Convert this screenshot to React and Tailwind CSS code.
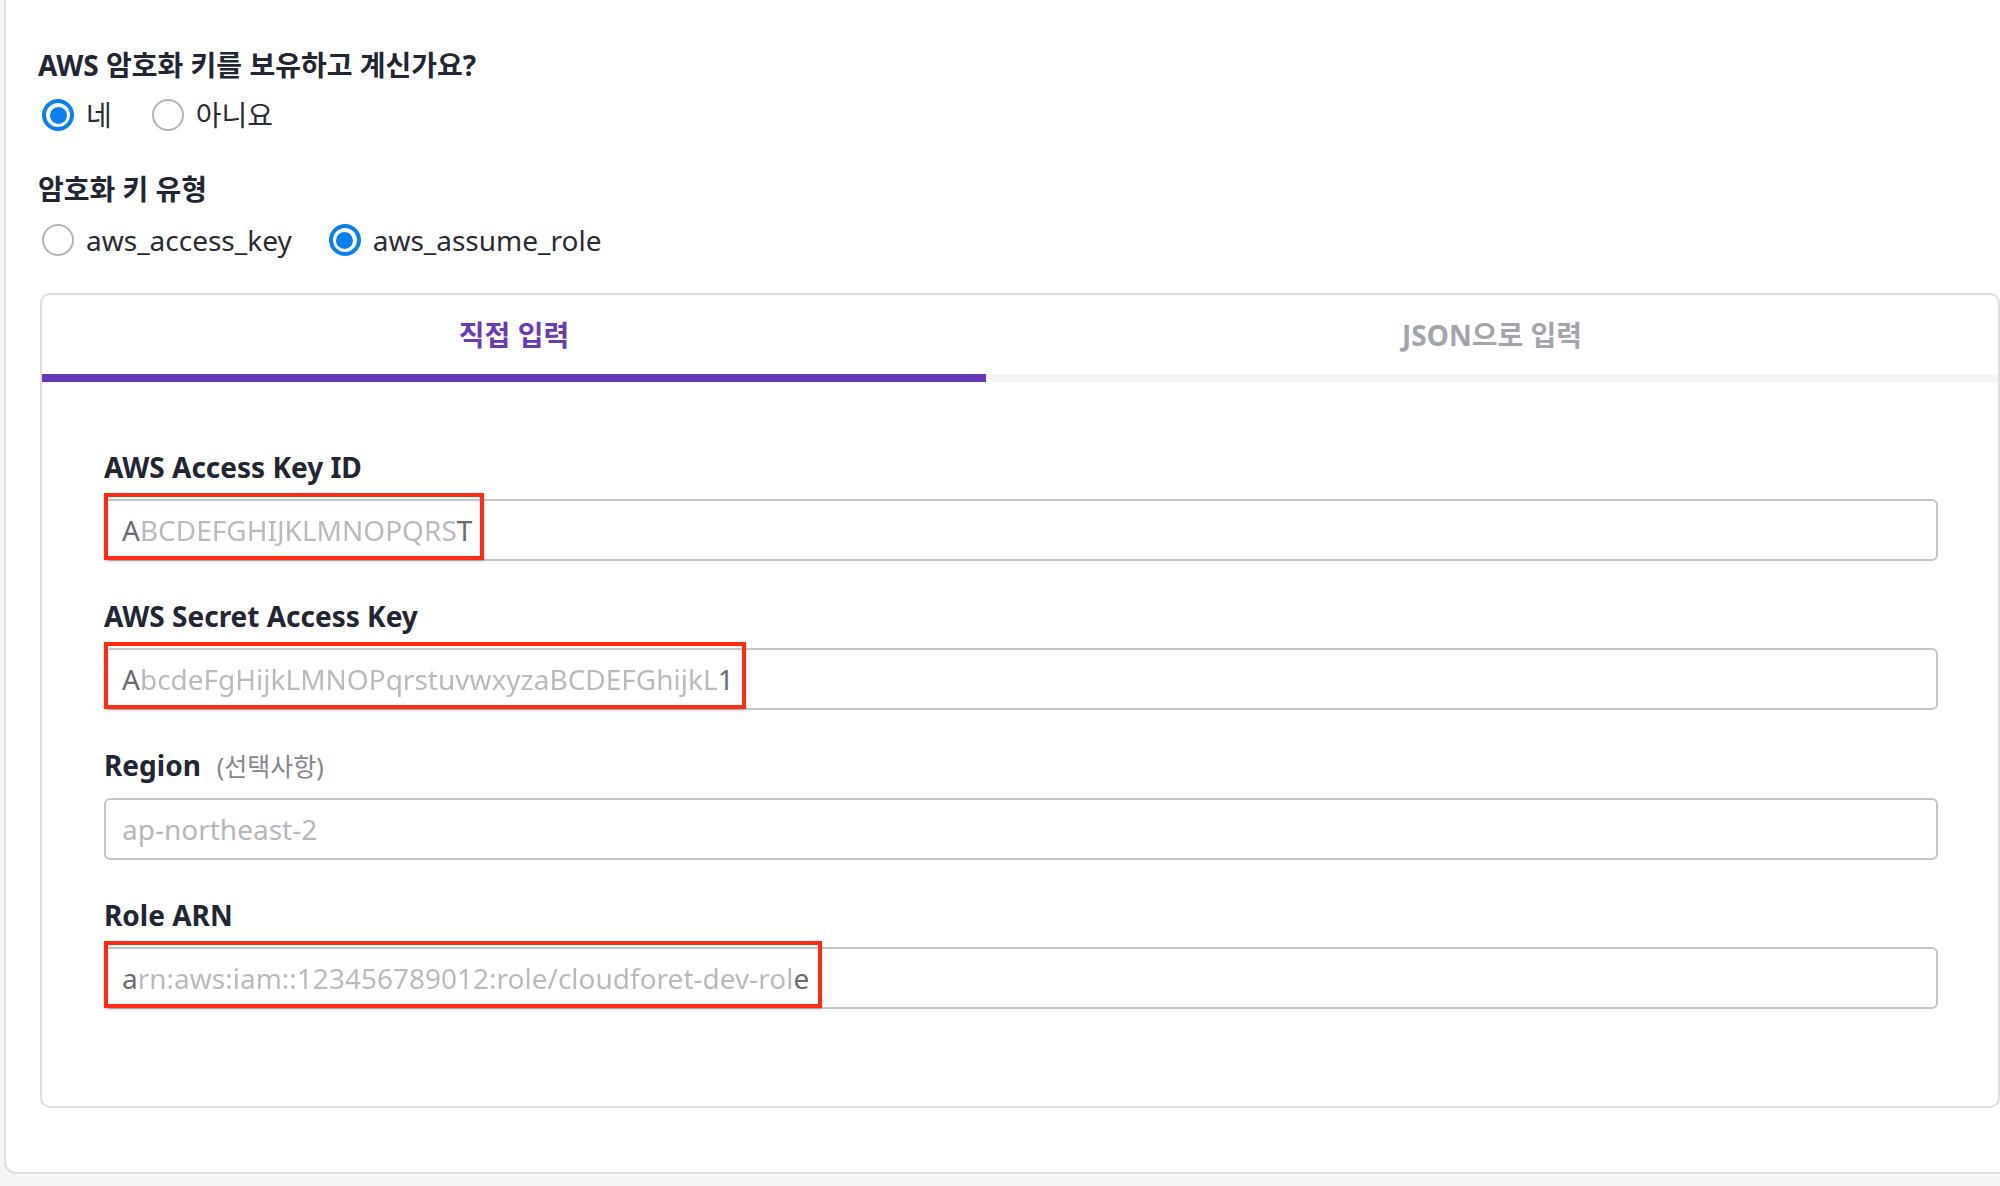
import React from "react";

const FONT = { fontFamily: '"Noto Sans", "Noto Sans CJK KR", sans-serif' };

function Radio({ checked, label }) {
  return (
    <div className="flex items-center gap-[12px]">
      {checked ? (
        <span className="flex h-[32px] w-[32px] items-center justify-center rounded-full border-[4px] border-[#0b7ff2] bg-white">
          <span className="h-[17px] w-[17px] rounded-full bg-[#0b7ff2]" />
        </span>
      ) : (
        <span className="h-[32px] w-[32px] rounded-full border-[2px] border-[#b4b4b8] bg-white" />
      )}
      <span className="text-[28px] leading-[36px] text-[#2a2b33]">{label}</span>
    </div>
  );
}

function Field({ label, optional, children, redWidth }) {
  return (
    <div>
      <div className="flex items-baseline">
        <span className="text-[28px] font-bold leading-[36px] text-[#222532]">{label}</span>
        {optional && (
          <span className="ml-[16px] text-[25px] leading-[36px] text-[#85858f]">{optional}</span>
        )}
      </div>
      <div className="relative mt-[14px]">
        <div className="flex h-[62px] items-center rounded-[6px] border-2 border-[#c4c4c9] bg-white px-[16px] text-[28px] leading-[36px]">
          {children}
        </div>
        {redWidth && (
          <div
            className="absolute left-0 top-[-6px] h-[67px] border-[4px] border-[#ff2b13] shadow-[0_2px_2px_rgba(0,0,0,0.15)]"
            style={{ width: redWidth }}
          />
        )}
      </div>
    </div>
  );
}

function Blurred({ first, middle, last }) {
  return (
    <span className="whitespace-nowrap">
      <span className="text-[#6b6b72]">{first}</span>
      <span className="text-[#b9b9bf] blur-[0.7px]">{middle}</span>
      <span className="text-[#6b6b72]">{last}</span>
    </span>
  );
}

export default function App() {
  return (
    <div className="h-[1186px] w-full overflow-hidden bg-[#f5f5f5]" style={FONT}>
      <div className="ml-[4px] h-[1174px] rounded-bl-[12px] border-b-2 border-l-2 border-[#dedee0] bg-white pl-[32px] pt-[47px]">
        <div className="text-[28px] font-bold leading-[36px] text-[#222532]">
          AWS 암호화 키를 보유하고 계신가요?
        </div>
        <div className="ml-[4px] mt-[14px] flex gap-x-[40px]">
          <Radio checked label="네" />
          <Radio label="아니요" />
        </div>
        <div className="mt-[38px] text-[28px] font-bold leading-[36px] text-[#222532]">
          암호화 키 유형
        </div>
        <div className="ml-[4px] mt-[15px] flex gap-x-[37px]">
          <Radio label="aws_access_key" />
          <Radio checked label="aws_assume_role" />
        </div>

        <div className="ml-[2px] mt-[35px] w-[1960px] rounded-[10px] border-2 border-[#dedee0] bg-white">
          <div className="flex">
            <div className="flex w-[944px] flex-col">
              <div className="flex h-[79px] items-center justify-center text-[28px] font-bold text-[#6a3ab8]">
                직접 입력
              </div>
              <div className="h-[8px] bg-[#6838b6]" />
            </div>
            <div className="flex flex-1 flex-col">
              <div className="flex h-[79px] items-center justify-center text-[28px] font-bold text-[#a3a3ab]">
                JSON으로 입력
              </div>
              <div className="h-[8px] bg-[#f5f5f6]" />
            </div>
          </div>

          <div className="flex flex-col gap-[37px] pb-[97px] pl-[62px] pr-[60px] pt-[67px]">
            <Field label="AWS Access Key ID" redWidth={380}>
              <Blurred first="A" middle="BCDEFGHIJKLMNOPQRS" last="T" />
            </Field>
            <Field label="AWS Secret Access Key" redWidth={642}>
              <Blurred first="A" middle="bcdeFgHijkLMNOPqrstuvwxyzaBCDEFGhijkL" last="1" />
            </Field>
            <Field label="Region" optional="(선택사항)">
              <span className="text-[#b6b6bc]">ap-northeast-2</span>
            </Field>
            <Field label="Role ARN" redWidth={718}>
              <Blurred first="a" middle="rn:aws:iam::123456789012:role/cloudforet-dev-rol" last="e" />
            </Field>
          </div>
        </div>
      </div>
    </div>
  );
}
